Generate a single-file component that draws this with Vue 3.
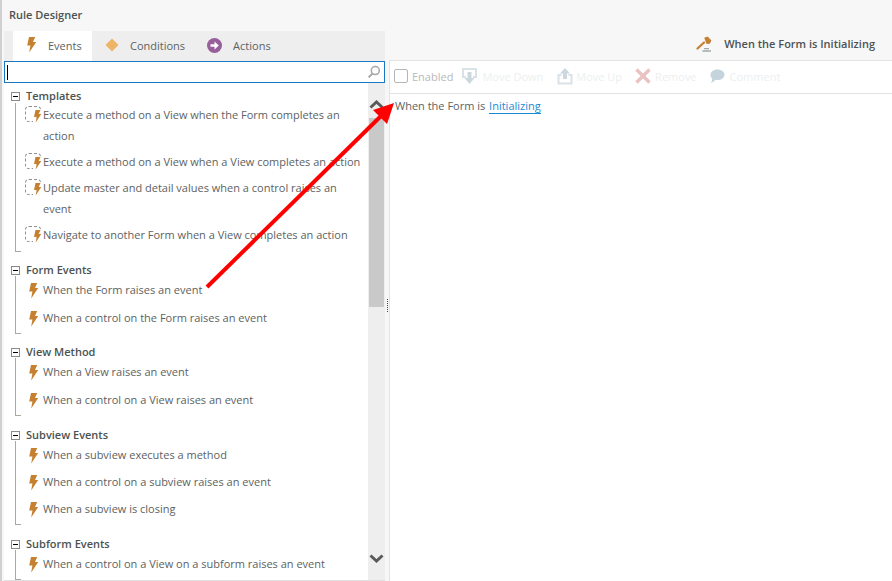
<script setup>
const groups = [
  { title: 'Templates', cls: 'g-templates', items: [
    { t: 'Execute a method on a View when the Form completes an action', tpl: true },
    { t: 'Execute a method on a View when a View completes an action', tpl: true },
    { t: 'Update master and detail values when a control raises an event', tpl: true },
    { t: 'Navigate to another Form when a View completes an action', tpl: true },
  ]},
  { title: 'Form Events', cls: 'g-wide', items: [
    { t: 'When the Form raises an event' },
    { t: 'When a control on the Form raises an event' },
  ]},
  { title: 'View Method', cls: 'g-wide', items: [
    { t: 'When a View raises an event' },
    { t: 'When a control on a View raises an event' },
  ]},
  { title: 'Subview Events', cls: 'g-mid', items: [
    { t: 'When a subview executes a method' },
    { t: 'When a control on a subview raises an event' },
    { t: 'When a subview is closing' },
  ]},
  { title: 'Subform Events', cls: 'g-mid', items: [
    { t: 'When a control on a View on a subform raises an event' },
  ]},
]
const bolt = 'M3 0H9.200L7 5H10.200L3.200 15.500 4.400 8.500H1.200Z'
</script>

<template>
  <div class="page">
    <header class="title">Rule Designer</header>
    <div class="body">
      <section class="left">
        <nav class="tabs">
          <div class="tab active">
            <svg width="11" height="16" viewBox="0 0 11 16"><path :d="bolt" fill="#c58131"/></svg>
            <span>Events</span>
          </div>
          <div class="tab t2">
            <svg width="14" height="14" viewBox="0 0 14 14"><path d="M7 0.5 13.5 7 7 13.5 0.5 7Z" fill="#eeb467"/></svg>
            <span>Conditions</span>
          </div>
          <div class="tab t3">
            <svg width="15" height="15" viewBox="0 0 15 15"><circle cx="7.5" cy="7.5" r="7.5" fill="#995f9b"/><path d="M3.5 6.2H7.5V3.6L11.8 7.5 7.5 11.4V8.8H3.5Z" fill="#fff"/></svg>
            <span>Actions</span>
          </div>
        </nav>
        <div class="search">
          <i class="caret"></i>
          <svg width="14" height="14" viewBox="0 0 14 14" fill="none" stroke="#a6a6a6" stroke-width="1.5"><circle cx="8.3" cy="5.6" r="4"/><path d="M5.4 8.6 1.6 12.4" stroke-width="2"/></svg>
        </div>
        <div class="list">
          <div class="tree">
            <div v-for="g in groups" :key="g.title" class="group" :class="g.cls">
              <div class="head"><b class="box"></b>{{ g.title }}</div>
              <ul class="items">
                <li v-for="it in g.items" :key="it.t" class="item">
                  <span class="ic" :class="{ tpl: it.tpl }">
                    <svg viewBox="0 0 11 16"><path :d="bolt" fill="#c58131"/></svg>
                  </span>
                  <span class="txt">{{ it.t }}</span>
                </li>
              </ul>
            </div>
          </div>
          <div class="scroll">
            <svg class="chev" width="15" height="9" viewBox="0 0 15 9" fill="none" stroke="#5a5a5a" stroke-width="3"><path d="M1.5 7.5 7.5 2 13.5 7.5"/></svg>
            <div class="thumb"></div>
            <svg class="chev down" width="15" height="9" viewBox="0 0 15 9" fill="none" stroke="#5a5a5a" stroke-width="3"><path d="M1.5 1.5 7.5 7 13.5 1.5"/></svg>
          </div>
        </div>
      </section>
      <div class="split"><i></i></div>
      <section class="right">
        <div class="rhead">
          <svg width="17" height="16" viewBox="0 0 17 16">
            <path d="M1.5 12.5 8 6.5" stroke="#c58131" stroke-width="2.2" stroke-linecap="round"/>
            <path d="M8.2 1.8 11.6 0.4 15.4 4.4 13.8 7.8 10.6 8Z" fill="#c58131"/>
            <path d="M8 12.6H13M6.5 15H15" stroke="#a4a8a8" stroke-width="1.3"/>
          </svg>
          <span>When the Form is Initializing</span>
        </div>
        <div class="tools">
          <span class="check"></span><span class="tl en">Enabled</span>
          <svg class="m1" width="16" height="17" viewBox="0 0 16 17"><path d="M0 0H15V10H11V8H13V2H2V8H4V10H0Z" fill="#d9e2e6"/><path d="M5.5 4H9.5V10H12.5L7.5 16 2.5 10H5.5Z" fill="#cbd8de"/></svg>
          <span class="tl">Move Down</span>
          <svg class="m2" width="16" height="17" viewBox="0 0 16 17"><path d="M8 0 13 5.500H10V11H6V5.500H3Z" fill="#cbd8de"/><path d="M0.500 6H4.500V8H2.500V14.500H13.500V8H11.500V6H15.500V16.500H0.500Z" fill="#d9e2e6"/></svg>
          <span class="tl">Move Up</span>
          <svg class="m3" width="16" height="16" viewBox="0 0 16 16" fill="none" stroke="#eac2c2" stroke-width="3.4"><path d="M1.500 1.500 14.500 14.500M14.500 1.500 1.500 14.500"/></svg>
          <span class="tl">Remove</span>
          <svg class="m4" width="15" height="15" viewBox="0 0 15 15"><path d="M7.500 0.500C11.400 0.500 14.500 2.800 14.500 5.700S11.400 11 7.500 11C6.800 11 6 10.900 5.400 10.800 4.400 12.400 2.600 13.600 0.800 14 1.700 12.900 2.300 11.400 2.200 9.600 1.100 8.700 0.500 7.300 0.500 5.700 0.500 2.800 3.600 0.500 7.500 0.500Z" fill="#c4d4dc"/></svg>
          <span class="tl">Comment</span>
        </div>
        <div class="rule">When the Form is <a>Initializing</a></div>
      </section>
    </div>
    <svg class="arrow" width="892" height="581" viewBox="0 0 892 581">
      <path d="M207 287 381 116" stroke="#f00" stroke-width="4" fill="none"/>
      <path d="M394 103 387 124 373 110Z" fill="#f00"/>
    </svg>
  </div>
</template>

<style scoped>
.page { position: relative; width: 892px; height: 581px; overflow: hidden; background: #f7f7f7; font: 11px/21px "Open Sans", sans-serif; color: #5d6262; border-left: 2px solid #d0d0d0; box-sizing: border-box; display: flex; flex-direction: column; }
.title { height: 31px; line-height: 30px; padding-left: 7px; font-weight: 600; color: #4c5252; flex: none; }
.body { flex: 1; display: flex; min-height: 0; padding-left: 2px; }
.left { width: 381px; flex: none; display: flex; flex-direction: column; border-bottom: 1px solid #e0e0e0; }
.tabs { height: 30px; background: #eee; display: flex; padding-left: 9px; flex: none; }
.tab { display: flex; align-items: center; font-size: 11px; color: #5d6262; padding-bottom: 2px; box-sizing: border-box; }
.tab.active { width: 79px; background: #fff; padding-left: 13px; gap: 11px; }
.tab.t2 { margin-left: 13px; gap: 11px; }
.tab.t3 { margin-left: 22px; gap: 11px; }
.search { height: 22px; box-sizing: border-box; border: 1px solid #1a78c2; background: #fff; display: flex; align-items: center; justify-content: space-between; padding: 0 3px 0 2px; flex: none; }
.caret { width: 1px; height: 15px; background: #000; }
.list { flex: 1; min-height: 0; display: flex; background: #fff; }
.tree { flex: 1; min-width: 0; overflow: hidden; padding: 4px 0 0 7px; }
.group { position: relative; margin-bottom: 8px; }
.group::before { content: ""; position: absolute; left: 4px; top: 16px; bottom: 0; width: 5px; border-left: 1px solid #aaa99c; border-bottom: 1px solid #aaa99c; }
.head { height: 19px; line-height: 19px; padding-left: 15px; font-weight: 600; color: #4c5252; display: flex; align-items: center; }
.g-templates .head { height: 17px; line-height: 17px; }
.box { position: absolute; left: 0; top: 6px; width: 9px; height: 9px; box-sizing: border-box; border: 1px solid #8a8a8a; background: linear-gradient(#000, #000) center / 5px 1px no-repeat #fff; }
.g-templates .box { top: 5px; }
.items { list-style: none; margin: 0; padding: 0 0 0 14px; display: flex; flex-direction: column; }
.g-templates .items { gap: 5px; padding-bottom: 7px; }
.g-wide .items { gap: 7px; padding-bottom: 6px; }
.g-mid { margin-top: 9px; }
.g-mid .items { gap: 6px; padding-bottom: 6px; }
.item { display: flex; align-items: flex-start; padding-right: 6px; }
.ic { width: 18px; flex: none; height: 21px; display: flex; justify-content: center; align-items: center; padding-left: 1px; box-sizing: border-box; position: relative; }
.ic svg { width: 11px; height: 16px; position: relative; left: -1px; top: 1px; }
.ic.tpl::before { content: ""; position: absolute; left: 0; top: 2px; width: 14px; height: 14px; border: 1px dashed #8f8f8f; border-radius: 4px; }
.ic.tpl svg { width: 9px; height: 13px; left: 3px; top: 2px; background: #fff; }
.txt { flex: 1; }
.scroll { width: 17px; flex: none; background: #eee; display: flex; flex-direction: column; align-items: center; }
.chev { margin-top: 17px; flex: none; }
.thumb { width: 15px; height: 189px; background: #c9c9c9; margin-top: 9px; flex: none; }
.chev.down { margin-top: 247px; }
.split { width: 4px; flex: none; background: #f7f7f7; position: relative; }
.split i { position: absolute; left: 2px; top: 268px; width: 1px; height: 13px; background: repeating-linear-gradient(#444 0 1px, transparent 1px 2px); }
.right { flex: 1; min-width: 0; display: flex; flex-direction: column; background: #fff; }
.rhead { height: 29px; background: #f7f7f7; display: flex; align-items: center; justify-content: flex-end; padding: 0 17px 4px 0; box-sizing: border-box; font-weight: 600; color: #4c5252; gap: 11px; flex: none; }
.tools { height: 34px; box-sizing: border-box; border: 1px solid #e3e3e3; border-right: 0; display: flex; align-items: center; padding: 0 0 2px 4px; color: #eceff0; flex: none; }
.check { width: 14px; height: 14px; box-sizing: border-box; border: 1px solid #b5b5b5; border-radius: 2px; }
.tl.en { margin-left: 4px; color: #b9b9b9; }
.m1 { margin-left: 9px; margin-right: 4px; }
.m2 { margin-left: 14px; margin-right: 3px; }
.m3 { margin-left: 13px; margin-right: 4px; }
.m4 { margin-left: 13px; margin-right: 5px; }
.rule { flex: 1; padding: 1px 5px; border-left: 1px solid #e3e3e3; }
.rule a { color: #1a8ad4; border-bottom: 1px solid #1a8ad4; line-height: 14px; display: inline-block; margin-left: 1px; }
.arrow { position: absolute; left: -2px; top: 0; pointer-events: none; }
</style>
